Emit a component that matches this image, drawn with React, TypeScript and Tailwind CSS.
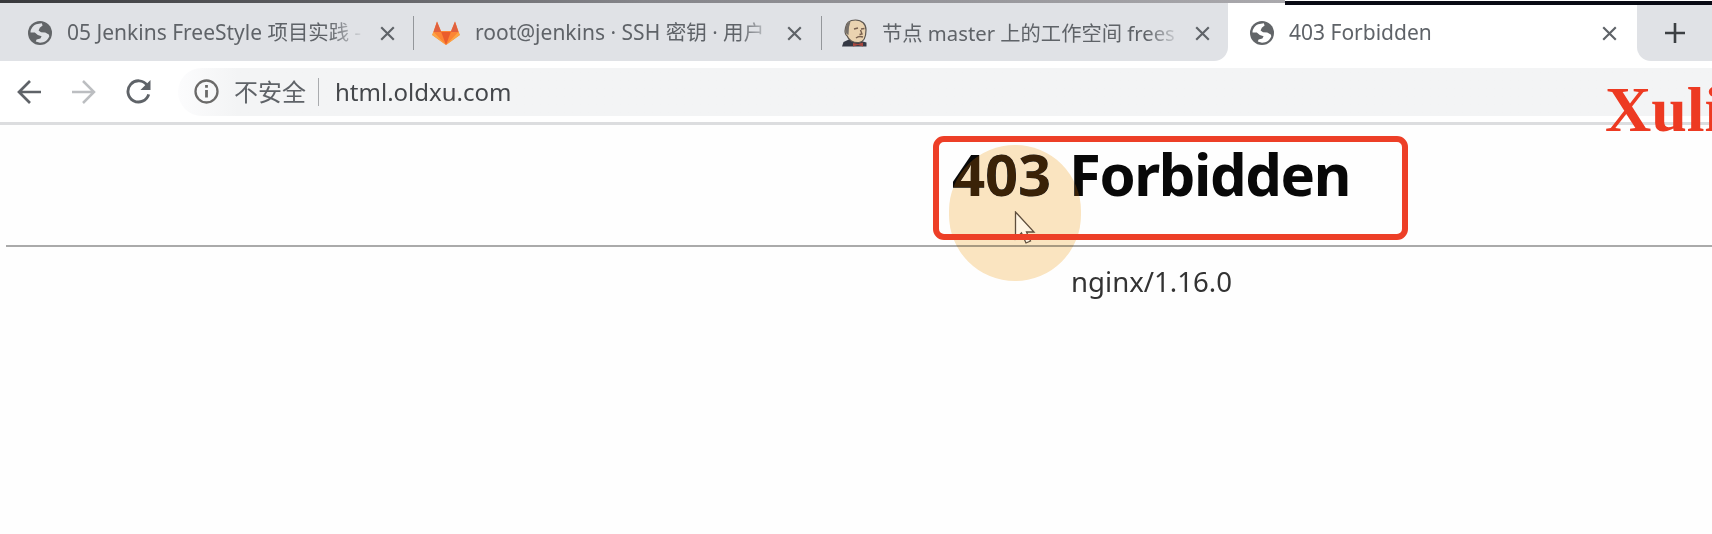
import React from "react";

type IconProps = { className?: string };

const Globe = ({ className }: IconProps) => (
  <svg viewBox="0 0 24 24" className={className}>
    <circle cx="12" cy="12" r="12" fill="#626568" />
    <path d="M8.200 3.200L13.800 2.300L14.600 4.600L11.800 6.800L10.600 9.400L13 11.200L17.200 11.400L20.800 13.400L21.300 15.200C20 19 16.500 21.600 12 21.700L7.800 20.600L8.600 18.600L12.400 17.400L13.600 15.200L9.800 14L6.800 11.600L2.500 11.400C2.600 7.800 5 4.600 8.200 3.200z" fill="currentColor" />
  </svg>
);

const Cross = ({ className }: IconProps) => (
  <svg viewBox="0 0 16 16" className={className} fill="none" stroke="currentColor" strokeWidth="2.300">
    <path d="M1.3 1.3L14.7 14.7M14.7 1.3L1.3 14.7" />
  </svg>
);

const Gitlab = () => (
  <svg viewBox="0 0 28 24" className="h-6 w-7 shrink-0">
    <path d="M5 0.5L9 10H19L23 0.5L27.8 14L14 24L0.2 14z" fill="#fc8535" />
    <path d="M5 0.5L1.6 11H9.2zM23 0.5L26.4 11H18.8z" fill="#e0603f" />
    <path d="M9.2 11H18.8L14 24z" fill="#ea5c2c" />
    <path d="M1.6 11L0.2 14L14 24zM26.4 11L27.8 14L14 24z" fill="#fca545" />
  </svg>
);

const Butler = () => (
  <svg viewBox="0 0 26 28" className="h-7 w-[26px] shrink-0">
    <path d="M0 27.5L1.5 23L8 20L19 22L24.5 23.5V27.5z" fill="#343844" />
    <path d="M3.500 9C4 3.500 8 1 13.500 1C20 1 24 5 24 11C24 17 22.500 23 17 23.500C11 24 6.500 21 5.200 17C3 15.500 2.800 12 3.500 9z" fill="#ead3b0" stroke="#5c5650" strokeWidth="1.2" />
    <path d="M3.500 12C3 7 5 3.500 8.500 2.500L7 8L6.500 16L4.500 15z" fill="#76706a" />
    <path d="M12 10L16 9M19 10L22.500 9.500M18.500 11L20 15L17.500 15.500M14 19Q17 16.500 21 18" fill="none" stroke="#78604f" strokeWidth="1.4" />
    <path d="M11 24L16 25L21 23.500V27.500L16 26L11 27.500z" fill="#a8483f" />
  </svg>
);

const Separator = () => <span className="h-[34px] w-px shrink-0 bg-[#94979b]" />;

const fade = "[mask-image:linear-gradient(to_right,black_calc(100%-36px),transparent)]";

export default function App() {
  return (
    <div className="relative flex h-[534px] w-[1712px] flex-col overflow-hidden bg-[#fefefe] font-['Noto_Sans','Noto_Sans_CJK_SC',sans-serif] text-[#5f6368]">
      <div className="flex h-[5px] shrink-0">
        <div className="h-[3px] w-[1285px] bg-linear-to-r from-[#38393c] via-[#85858a] to-[#aaa9ad]" />
        <div className="mt-px h-1 flex-1 bg-[#090a14]" />
      </div>

      <header className="-mt-[2px] flex h-[58px] shrink-0">
        <div className="flex w-[1228px] bg-white">
          <div className="flex flex-1 items-center rounded-br-[14px] bg-[#e0e2e6] pt-[2px]">
            <div className="flex w-[413px] items-center pl-7">
              <Globe className="size-6 shrink-0 text-[#e0e2e6]" />
              <div className={"ml-[15px] w-[298px] overflow-hidden whitespace-nowrap text-[21px] " + fade}>
                <span>05 Jenkins FreeStyle </span>
                <span className="text-[20.400px]">项目实践 -</span>
              </div>
              <Cross className="ml-[15px] size-[15px] shrink-0" />
            </div>
            <Separator />
            <div className="flex w-[407px] items-center pl-[18px]">
              <Gitlab />
              <div className={"ml-[15px] w-[300px] overflow-hidden whitespace-nowrap text-[21px] " + fade}>
                <span>root@jenkins · SSH </span>
                <span className="text-[20.600px]">密钥 · 用户</span>
              </div>
              <Cross className="ml-[12px] size-[15px] shrink-0" />
            </div>
            <Separator />
            <div className="flex flex-1 items-center pl-5">
              <Butler />
              <div className={"ml-[14px] w-[300px] overflow-hidden whitespace-nowrap text-[20.300px] " + fade}>
                <span>节点 master 上的工作空间 frees</span>
              </div>
              <Cross className="ml-[13px] size-[15px] shrink-0" />
            </div>
          </div>
        </div>
        <div className="mt-[2px] flex w-[409px] items-center bg-white pl-[22px]">
          <Globe className="size-6 shrink-0 text-white" />
          <span className="ml-[15px] w-[312px] whitespace-nowrap text-[21px]">403 Forbidden</span>
          <Cross className="ml-px size-[15px] shrink-0" />
        </div>
        <div className="mt-[2px] flex flex-1 bg-white">
          <div className="flex flex-1 items-center rounded-bl-[14px] bg-[#e0e2e6] pl-7">
            <svg viewBox="0 0 20 20" className="size-5" stroke="#3c4043" strokeWidth="2.6">
              <path d="M10 0V20M0 10H20" />
            </svg>
          </div>
        </div>
      </header>

      <nav className="flex h-[64px] shrink-0 items-center border-b-[3px] border-[#dcdddf] bg-white pl-[17px]">
        <svg viewBox="0 0 24 24" className="size-6" fill="none" stroke="#5f6368" strokeWidth="2.7">
          <path d="M24 12H2M13 1L2 12L13 23" />
        </svg>
        <svg viewBox="0 0 24 24" className="ml-[31px] size-6" fill="none" stroke="#bcbec1" strokeWidth="2.5">
          <path d="M0 12H22M11 1L22 12L11 23" />
        </svg>
        <svg viewBox="0 0 26 26" className="ml-[30px] size-[25px]" fill="none" stroke="#5f6368" strokeWidth="3">
          <path d="M22 6.500A11 11 0 1 0 23.600 16" />
          <path d="M25.500 1V11.500H15z" fill="#5f6368" stroke="none" />
        </svg>
        <div className="ml-[27px] flex h-12 flex-1 items-center rounded-l-full bg-linear-to-r from-[#fcfcfd] to-[#f3f4f5] to-[60px] pl-[16px]">
          <svg viewBox="0 0 25 25" className="size-[25px]" fill="none" stroke="#6b6a69" strokeWidth="2.300">
            <circle cx="12.500" cy="12.500" r="11" />
            <path d="M12.500 11V18.500M12.500 6V8.700" strokeWidth="2.800" />
          </svg>
          <span className="ml-[15px] w-[72px] whitespace-nowrap text-[24px]">不安全</span>
          <span className="ml-[12px] h-7 w-px bg-[#a9abae]" />
          <span className="ml-4 whitespace-nowrap text-[24px] text-[#44474b]">html.oldxu.com</span>
        </div>
      </nav>

      <main className="flex flex-1 flex-col">
        <h1 className="flex h-[120px] gap-[18px] pt-[13px] pl-[952px] text-[58px] leading-[72px] font-bold whitespace-nowrap text-[#080808]">
          <span className="w-[99px] tracking-[-0.2px]">403</span>
          <span className="tracking-[-1.400px]">Forbidden</span>
        </h1>
        <hr className="ml-[6px] border-t-2 border-[#aaaaaa]" />
        <p className="pt-[14px] pl-[1071px] text-[27.600px] leading-[40px] text-[#333333]">
          <span>nginx/1.16.0</span>
        </p>
      </main>

      <div className="absolute top-[145px] left-[949px] h-[136px] w-[132px] rounded-full bg-[#fbe5c1] mix-blend-multiply" />
      <div className="absolute top-[145px] left-[949px] h-[136px] w-[132px] rounded-full bg-[#3a2200] mix-blend-lighten" />
      <svg viewBox="0 0 22 34" className="absolute top-[211px] left-[1014px] h-[34px] w-[22px]">
        <path d="M1.500 1V28L7.500 22L12 32L16.500 30L12.500 21H20z" fill="#fff5e3" stroke="#5f4e3c" strokeWidth="1.300" />
      </svg>
      <div className="absolute top-[136px] left-[933px] h-[104px] w-[475px] rounded-[11px] border-[6px] border-[#ed3f27]" />
      <div className="absolute top-[73px] left-[1605px] font-['Liberation_Serif',serif] text-[64px] leading-[74px] font-bold whitespace-nowrap text-[#ed3a22]">
        <span>Xuli</span>
      </div>
    </div>
  );
}
